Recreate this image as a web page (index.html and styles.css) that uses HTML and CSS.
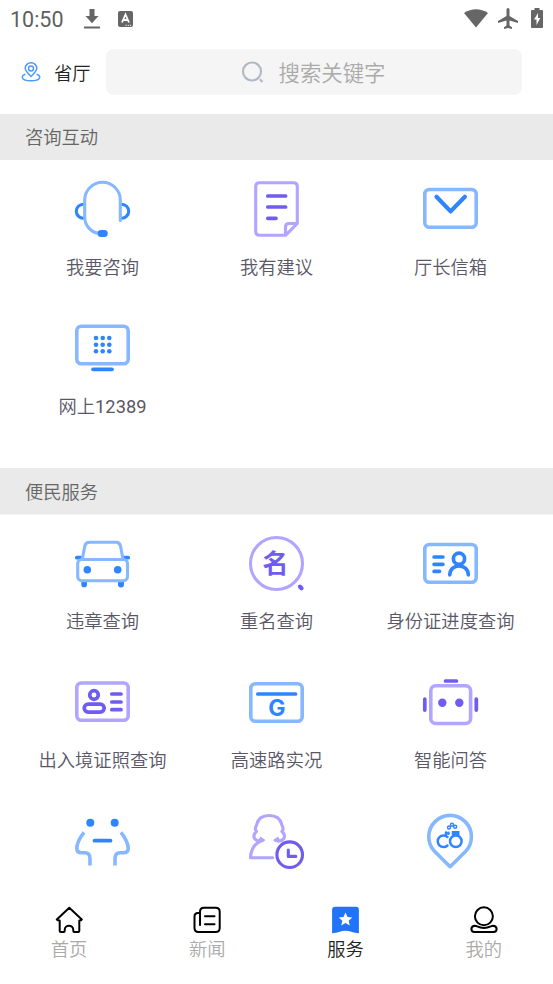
FILE: index.html
```html
<!DOCTYPE html>
<html lang="zh-CN">
<head>
<meta charset="utf-8">
<title>服务</title>
<link rel="stylesheet" href="styles.css">
</head>
<body>
<div class="app">
  <div class="status">
    <span class="clock">10:50</span>
    <svg class="st-download" viewBox="0 0 16 22"><path d="M5.500 1h5v7h4L8 15.300 1.500 8h4zM0 18.500h16v2H0z"/></svg>
    <svg class="st-app" viewBox="0 0 15 16"><rect width="15" height="16" rx="2"/><path class="cut" d="M4 11.500 7.500 3.500 11 11.500M5.300 9h4.400"/><path class="dots" d="M7.500 14.300h6"/></svg>
    <span class="spacer"></span>
    <svg class="st-wifi" viewBox="0 0 24 19"><path d="M0 4Q12-3.500 24 4L12 18.500z"/></svg>
    <svg class="st-plane" viewBox="0 0 20 21"><path d="M8.500 1.500a1.500 1.500 0 0 1 3 0V8l8.500 5v2l-8.500-2.500v5L14 19.300V21l-4-1-4 1v-1.700l2.500-1.800v-5L0 15v-2l8.500-5z"/></svg>
    <svg class="st-battery" viewBox="0 0 12 20"><path d="M3.500 0h5v2H11q1 0 1 1v16q0 1-1 1H1q-1 0-1-1V3q0-1 1-1h2.500z"/><path class="bolt" d="M7 5 3 11.500h2.500V17L9.300 10H7z"/></svg>
  </div>

  <header class="topbar">
    <svg class="place" viewBox="0 0 20 20"><path d="M10 14.500C6.500 11 4.200 9 4.200 6.300a5.800 5.500 0 0 1 11.600 0C15.800 9 13.500 11 10 14.500z"/><circle cx="10" cy="6.500" r="2.500"/><path d="M4.500 12.200C-.5 13.500-.5 18.800 10 18.800s10.500-5.300 5.500-6.600"/></svg>
    <span class="city">省厅</span>
    <div class="search">
      <svg viewBox="0 0 24 24"><circle cx="11" cy="11.500" r="9"/><path d="m19 19.300 2.500 2.600"/></svg>
      <span>搜索关键字</span>
    </div>
  </header>

  <main class="content">
    <h2>咨询互动</h2>
    <div class="grid">
      <a class="item"><svg viewBox=".5 0 56 56" class="ico blue"><path class="deep thin" d="M8.800 23.200a7 7 0 0 0 0 14M47.200 23.200a7 7 0 0 1 0 14"/><path class="pale thin" d="M45.800 39.500V19.100a17.800 17.800 0 0 0-35.600 0V36c0 9 7 15.800 14.500 16.400"/><rect class="dot" x="23.200" y="49" width="10" height="7" rx="3.300"/></svg><span>我要咨询</span></a>
      <a class="item"><svg viewBox=".5 0 56 56" class="ico purple"><path class="pale thin" d="M37 54.300H11q-3.800 0-3.800-3.800v-45Q7.200 1.700 11 1.700h34q3.800 0 3.800 3.800v37zV46q0-3.500 3.500-3.500h8.300"/><path class="deep" d="M19.300 15h17.800M19.300 26h17.800M19.300 37.300h8.200"/></svg><span>我有建议</span></a>
      <a class="item"><svg viewBox=".5 0 56 56" class="ico blue"><rect class="pale" x="2.300" y="8.500" width="51.400" height="37.800" rx="4.500"/><path class="deep wide" d="m14 15.700 14.100 14.700 14.300-14.700"/></svg><span>厅长信箱</span></a>
      <a class="item"><svg viewBox=".5 0 56 56" class="ico blue"><rect class="pale" x="2.300" y="6.300" width="51.400" height="37.400" rx="4.500"/><path class="deep" d="M18.500 49.300h19"/><g class="dot"><circle cx="21.500" cy="18" r="2.300"/><circle cx="28.200" cy="18" r="2.300"/><circle cx="34.800" cy="18" r="2.300"/><circle cx="21.500" cy="24.700" r="2.300"/><circle cx="28.200" cy="24.700" r="2.300"/><circle cx="34.800" cy="24.700" r="2.300"/><circle cx="21.500" cy="31.300" r="2.300"/><circle cx="28.200" cy="31.300" r="2.300"/><circle cx="34.800" cy="31.300" r="2.300"/></g></svg><span>网上<b>12389</b></span></a>
    </div>

    <h2>便民服务</h2>
    <div class="grid">
      <a class="item"><svg viewBox=".5 -.5 56 56" class="ico blue"><path class="deep" d="M2.300 22.200h4M49.700 22.200h4"/><path class="dot" d="M6.800 46h5.700v3a2.500 2.500 0 0 1-5.700 0zM43.500 46h6v3a2.500 2.500 0 0 1-6 0z"/><rect class="pale thin" x="3.200" y="24" width="49.800" height="21.200" rx="4"/><path class="pale thin" d="m7.800 23.500 2.500-13q.8-3.800 4.500-3.800h26.700q3.700 0 4.500 3.800l2.500 13"/><g class="dot"><circle cx="12.800" cy="34.200" r="3.800"/><circle cx="43.200" cy="34.200" r="3.800"/></g></svg><span>违章查询</span></a>
      <a class="item"><svg viewBox=".5 -.5 56 56" class="ico purple"><circle class="pale thin" cx="28" cy="28" r="26"/><text x="27" y="37.500" class="mark name">名</text><path class="deep wide" d="m51.500 51.200 1.500 1.500"/></svg><span>重名查询</span></a>
      <a class="item"><svg viewBox=".5 -.5 56 56" class="ico blue"><rect class="pale" x="2.300" y="9" width="51.400" height="37.700" rx="4.500"/><path class="deep" d="M11.600 21.500h8.800M11.600 28.800h8.800M11.600 35.800H17M27.300 39.300c.2-12 18.300-12 18.500 0"/><circle class="deep" cx="36.500" cy="23.200" r="5.600"/></svg><span>身份证进度查询</span></a>
      <a class="item"><svg viewBox=".5 -.5 56 56" class="ico purple"><rect class="pale" x="2.300" y="8.500" width="51.400" height="37.300" rx="4.500"/><circle class="deep" cx="19.500" cy="20.500" r="4.300"/><rect class="deep" x="9.700" y="29.600" width="20" height="8" rx="4"/><path class="deep" d="M37.300 19.500h9.200M37.300 27.500h9.200M37.300 35.200h9.200"/></svg><span>出入境证照查询</span></a>
      <a class="item"><svg viewBox=".5 -.5 56 56" class="ico blue"><rect class="pale" x="2.300" y="9.300" width="51.400" height="37.400" rx="4.500"/><path class="deep" d="M9.300 19.500h37.700"/><text x="28.500" y="41" class="mark letter">G</text></svg><span>高速路实况</span></a>
      <a class="item"><svg viewBox=".5 -.5 56 56" class="ico purple"><rect class="pale" x="8.300" y="11.300" width="39.800" height="37.700" rx="5"/><path class="deep" d="M23 6.500h11M2.300 24.600v11M53.800 24.600v11"/><g class="dot"><circle cx="19.800" cy="28.200" r="4.200"/><circle cx="36.800" cy="28.200" r="4.200"/></g></svg><span>智能问答</span></a>
      <a class="item"><svg viewBox=".5 -.5 56 56" class="ico blue"><g class="dot"><circle cx="15.800" cy="9.200" r="4"/><circle cx="40.200" cy="9.200" r="4"/></g><path class="deep" d="M20 27.200h16"/><path class="pale butt" d="M9.500 18.800C5.500 24 2.300 30.500 2.300 34.800Q2.300 39.300 7 39.300h3.500q5 0 5 6V52M46.500 18.800c4 5.200 7.200 11.700 7.200 16q0 4.500-4.700 4.500h-3.500q-5 0-5 6V52"/></svg></a>
      <a class="item"><svg viewBox=".5 -.5 56 56" class="ico purple"><path class="pale thin" d="M24.200 44.200H2C2.500 34.500 8 28.800 14.500 26.800 9 28.500 5 26 5.500 22c.3-2 1.500-3.200 2.500-4-3-3 .2-5.300.2-7C9.500 5 14.500 2 20.700 2S31.900 5 33.200 11c0 1.700 3.200 4 .2 7 1 .8 2.200 2 2.500 4 .5 4-3.500 6.500-9 4.800"/><path class="soft" d="m10.500 25.500 1.500-2.500 5 3.700-6 2.500zM31 25.500 29.500 23l-5 3.700 6 2.500z"/><circle class="deep thin" cx="41.200" cy="41.200" r="12.800"/><path class="deep thin" d="M39.800 36.500v6.400h7.500"/></svg></a>
      <a class="item"><svg viewBox=".5 -.5 56 56" class="ico blue"><path class="pale" d="M27.600 53.200 12 37.800C6.500 32 6.300 27 6.300 23.200a21.300 21.300 0 0 1 42.600 0c0 3.800-.2 8.800-5.700 14.600z"/><circle class="deep fine" cx="33.300" cy="27.800" r="5.800"/><path class="deep fine" d="M25 23.500a5.800 5.800 0 1 0 0 8.500M23.500 19v2.500M26 19.200v1"/><path class="dot" d="M29.300 17.500H37v4.800h-7.700z"/><g class="deep chain"><circle cx="26.500" cy="14" r="1.500"/><circle cx="29.500" cy="11.300" r="1.500"/><circle cx="32.700" cy="13.300" r="1.500"/></g></svg></a>
    </div>
  </main>

  <nav class="tabs">
    <a class="tab"><svg viewBox="0 0 28 28"><path d="M14.300 1.700 1.800 13.500q1 1 2.900 1V25q0 1 1 1h3q1 0 1-1v-1c0-5.700 8.600-5.700 8.600 0v1q0 1 1 1h4q1 0 1-1V14.500q2 0 2.500-1z"/></svg><span>首页</span></a>
    <a class="tab"><svg viewBox="0 0 28 28"><path d="M7 19V5.700q0-4 4-4h11.700q4 0 4 4V22q0 4-4 4H5.500q-4 0-4-4V10.500Q1.500 7 5 7h2M12 10.200h9.500M12 18.300h9.500"/></svg><span>新闻</span></a>
    <a class="tab active"><svg viewBox=".5 0 28 28"><path class="badge" d="M3.600.7h20.800q3 0 3 3v23.600Q23 27 20.500 26 14 23.500 7.500 26 5 27 .6 27.300V3.700q0-3 3-3z"/><path class="star" d="m14 6.500 2 4.500 4.800.5-3.600 3.200 1.100 4.800L14 17l-4.300 2.500 1.100-4.800-3.600-3.200L12 11z"/></svg><span>服务</span></a>
    <a class="tab"><svg viewBox="0 0 28 28"><circle cx="13.900" cy="10.300" r="9"/><path d="M5 19.700C0 20 .5 26 4.500 26h19c4 0 4.500-6-.5-6.300-2 0-3.500 2.300-9.100 2.300S7 19.700 5 19.700z"/></svg><span>我的</span></a>
  </nav>
</div>
</body>
</html>
```

FILE: styles.css
```css
* { box-sizing: border-box; }
body {
  margin: 0;
  background: #fff;
  font-family: Roboto, "Noto Sans CJK SC", sans-serif;
  font-size: 18.3px;
  font-weight: 350;
}
.app {
  display: flex;
  flex-direction: column;
  width: 553px;
  height: 984px;
  overflow: hidden;
}
svg { display: block; flex: none; }

/* status bar */
.status {
  display: flex;
  flex: none;
  align-items: center;
  height: 37px;
  padding: 0 10px;
  color: #5f5f5f;
  fill: #666;
}
.clock { width: 74px; padding-top: 1px; font-size: 21.5px; font-weight: 400; }
.st-download { width: 16px; height: 22px; margin-right: 18px; }
.st-app { width: 15px; height: 16px; }
.st-app path { fill: none; stroke: #fff; stroke-width: 1.8; }
.st-app .dots { stroke-width: 1; stroke-dasharray: 1.2 1; }
.spacer { flex: 1; }
.st-wifi { width: 24px; height: 19px; margin-right: 10px; }
.st-plane { width: 20px; height: 21px; margin-right: 13px; }
.st-battery { width: 12px; height: 20px; margin-top: -1px; }
.bolt { fill: #fff; }

/* location and search */
.topbar {
  display: flex;
  flex: none;
  align-items: center;
  height: 77px;
  padding: 0 31px 7px 21px;
}
.place { width: 20px; height: 20px; fill: none; stroke: #4b9bff; stroke-width: 1.5; }
.city { width: 52px; margin-left: 13px; color: #222; }
.search {
  display: flex;
  flex: 1;
  align-items: center;
  justify-content: center;
  gap: 14px;
  height: 46px;
  padding-right: 2px;
  border-radius: 8px;
  background: #f5f5f5;
  color: #aaa;
  font-size: 21.4px;
}
.search span { padding-bottom: 2px; }
.search svg { width: 24px; height: 24px; fill: none; stroke: #b0bac5; stroke-width: 2.2; }

/* service sections */
.content { flex: 1; min-height: 0; overflow: hidden; }
h2 {
  height: 46px;
  margin: 0;
  padding: 1px 0 0 25px;
  background: #eaeaea;
  color: #666;
  font-size: 18.3px;
  font-weight: 350;
  line-height: 46px;
}
.grid {
  display: grid;
  grid-template-columns: repeat(3, 174px);
  grid-auto-rows: 139px;
  justify-content: center;
  padding: 21px 0 9px;
}
.grid + h2 { height: 47px; padding-top: 2px; border-bottom: 1px solid #f4f4f4; }
.grid ~ .grid { padding-top: 20px; }
.item {
  display: flex;
  flex-direction: column;
  align-items: center;
  color: #5a5766;
}
.item span { margin-top: 18px; line-height: 26px; white-space: nowrap; }
.item b { font-weight: 400; }
.ico { width: 56px; height: 56px; overflow: visible; fill: none; stroke-linecap: round; stroke-linejoin: round; }
.blue { --deep: #2f85ff; --pale: #86b8ff; }
.purple { --deep: #6f5cf0; --pale: #b1a5ff; }
.pale { stroke: var(--pale); stroke-width: 3.6; }
.deep { stroke: var(--deep); stroke-width: 3.7; }
.thin { stroke-width: 3.1; }
.wide { stroke-width: 4.2; }
.fine { stroke-width: 2.5; }
.chain { stroke-width: 1.4; }
.butt { stroke-linecap: butt; }
.dot { fill: var(--deep); }
.soft { fill: var(--pale); }
.mark { fill: var(--deep); text-anchor: middle; font-weight: 700; }
.name { font-family: "Noto Sans CJK SC", sans-serif; font-size: 26px; }
.letter { font-family: Inter, sans-serif; font-size: 23px; }

/* bottom tabs */
.tabs {
  display: grid;
  flex: none;
  grid-template-columns: repeat(4, 1fr);
  height: 98px;
  padding-top: 20px;
  background: #fff;
}
.tab { display: flex; flex-direction: column; align-items: center; color: #aaa; }
.tab svg { width: 28px; height: 28px; fill: none; stroke: #000; stroke-width: 2; stroke-linecap: round; stroke-linejoin: round; }
.tab span { margin-top: 3px; line-height: 26px; }
.tab .badge { fill: #2173fa; stroke: none; }
.tab .star { fill: #fff; stroke: none; }
.active { color: #222; }
```
